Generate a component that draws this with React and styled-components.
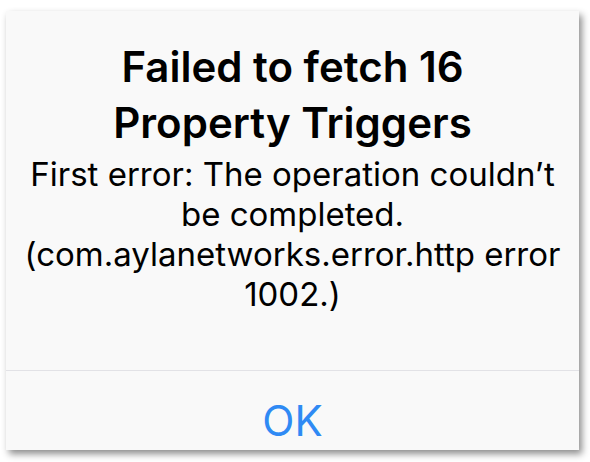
import React from 'react';
import styled, { createGlobalStyle } from 'styled-components';

const GlobalStyle = createGlobalStyle`
  html, body {
    margin: 0;
    padding: 0;
    background: #ffffff;
  }
  body {
    font-family: 'Inter', 'Liberation Sans', sans-serif;
    -webkit-font-smoothing: antialiased;
  }
`;

const Page = styled.div`
  width: 590px;
  height: 462px;
  padding: 11px 11px 0 6px;
  box-sizing: border-box;
`;

const Alert = styled.section`
  width: 573px;
  height: 439px;
  background: #f9f9f9;
  box-shadow: 3px 4px 7px rgba(0, 0, 0, 0.45);
  display: flex;
  flex-direction: column;
`;

const Content = styled.div`
  height: 359px;
  box-sizing: border-box;
  padding: 28px 12px 0;
  text-align: center;
  color: #000000;
`;

const Title = styled.h1`
  margin: 0;
  font-size: 42px;
  line-height: 56px;
  font-weight: 600;
`;

const Message = styled.p`
  margin: 3px 0 0;
  font-size: 33px;
  line-height: 40px;
  font-weight: 400;
`;

const Divider = styled.div`
  height: 1px;
  background: #e2e2e6;
`;

const Button = styled.button`
  flex: 1;
  border: none;
  background: transparent;
  font-family: inherit;
  font-size: 42px;
  font-weight: 400;
  color: #2f8af4;
  cursor: pointer;
  padding: 20px 0 0;
`;

const App = () => (
  <Page>
    <GlobalStyle />
    <Alert>
      <Content>
        <Title>
          Failed to fetch 16
          <br />
          Property Triggers
        </Title>
        <Message>
          First error: The operation couldn’t
          <br />
          be completed.
          <br />
          (com.aylanetworks.error.http error
          <br />
          1002.)
        </Message>
      </Content>
      <Divider />
      <Button type="button">OK</Button>
    </Alert>
  </Page>
);

export default App;
